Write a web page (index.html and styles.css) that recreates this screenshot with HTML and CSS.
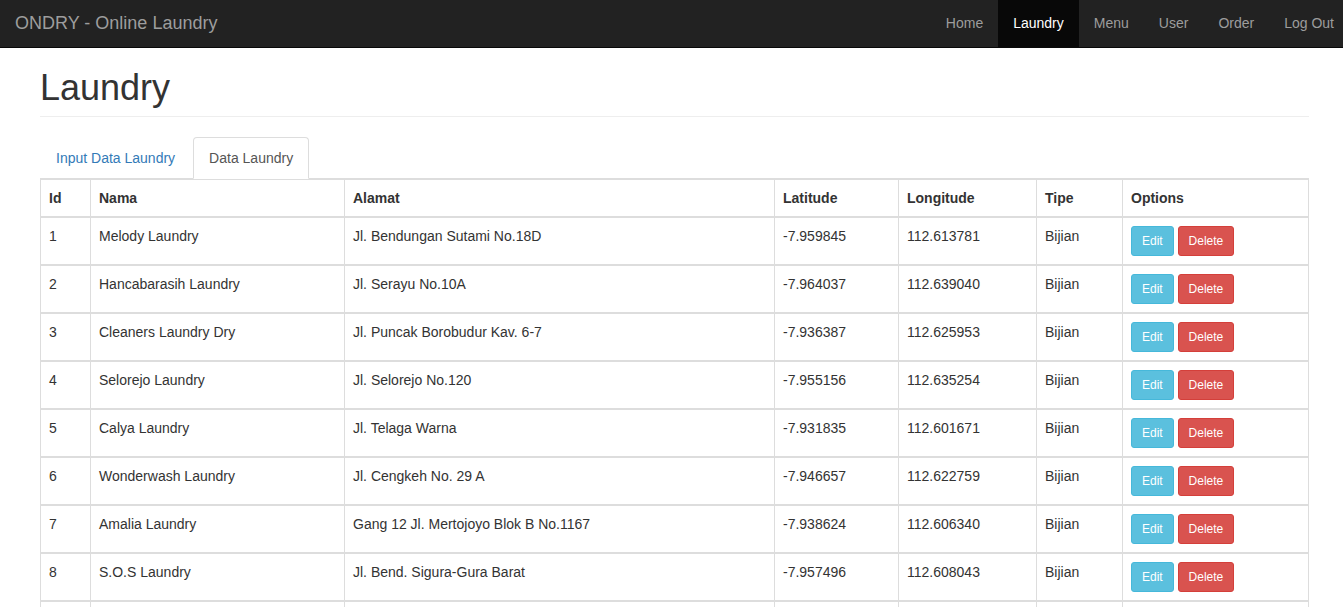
FILE: index.html
```html
<!DOCTYPE html>
<html>
<head>
<meta charset="utf-8">
<title>ONDRY - Online Laundry</title>
<link rel="stylesheet" href="styles.css">
</head>
<body>
<nav class="navbar">
  <a class="brand" href="#">ONDRY - Online Laundry</a>
  <ul class="nav-links">
    <li><a href="#">Home</a></li>
    <li class="active"><a href="#">Laundry</a></li>
    <li><a href="#">Menu</a></li>
    <li><a href="#">User</a></li>
    <li><a href="#">Order</a></li>
    <li><a href="#">Log Out</a></li>
  </ul>
</nav>
<div class="container">
  <div class="page-header"><h1>Laundry</h1></div>
  <ul class="tabs">
    <li><a href="#">Input Data Laundry</a></li>
    <li class="active"><a href="#">Data Laundry</a></li>
  </ul>
  <table class="data">
    <colgroup>
      <col class="c-id"><col class="c-nama"><col class="c-alamat"><col class="c-lat"><col class="c-lng"><col class="c-tipe"><col class="c-opt">
    </colgroup>
    <thead>
      <tr><th>Id</th><th>Nama</th><th>Alamat</th><th>Latitude</th><th>Longitude</th><th>Tipe</th><th>Options</th></tr>
    </thead>
    <tbody><tr><td>1</td><td>Melody Laundry</td><td>Jl. Bendungan Sutami No.18D</td><td>-7.959845</td><td>112.613781</td><td>Bijian</td><td><a class="btn info" href="#">Edit</a> <a class="btn danger" href="#">Delete</a></td></tr></tbody>
    <tbody><tr><td>2</td><td>Hancabarasih Laundry</td><td>Jl. Serayu No.10A</td><td>-7.964037</td><td>112.639040</td><td>Bijian</td><td><a class="btn info" href="#">Edit</a> <a class="btn danger" href="#">Delete</a></td></tr></tbody>
    <tbody><tr><td>3</td><td>Cleaners Laundry Dry</td><td>Jl. Puncak Borobudur Kav. 6-7</td><td>-7.936387</td><td>112.625953</td><td>Bijian</td><td><a class="btn info" href="#">Edit</a> <a class="btn danger" href="#">Delete</a></td></tr></tbody>
    <tbody><tr><td>4</td><td>Selorejo Laundry</td><td>Jl. Selorejo No.120</td><td>-7.955156</td><td>112.635254</td><td>Bijian</td><td><a class="btn info" href="#">Edit</a> <a class="btn danger" href="#">Delete</a></td></tr></tbody>
    <tbody><tr><td>5</td><td>Calya Laundry</td><td>Jl. Telaga Warna</td><td>-7.931835</td><td>112.601671</td><td>Bijian</td><td><a class="btn info" href="#">Edit</a> <a class="btn danger" href="#">Delete</a></td></tr></tbody>
    <tbody><tr><td>6</td><td>Wonderwash Laundry</td><td>Jl. Cengkeh No. 29 A</td><td>-7.946657</td><td>112.622759</td><td>Bijian</td><td><a class="btn info" href="#">Edit</a> <a class="btn danger" href="#">Delete</a></td></tr></tbody>
    <tbody><tr><td>7</td><td>Amalia Laundry</td><td>Gang 12 Jl. Mertojoyo Blok B No.1167</td><td>-7.938624</td><td>112.606340</td><td>Bijian</td><td><a class="btn info" href="#">Edit</a> <a class="btn danger" href="#">Delete</a></td></tr></tbody>
    <tbody><tr><td>8</td><td>S.O.S Laundry</td><td>Jl. Bend. Sigura-Gura Barat</td><td>-7.957496</td><td>112.608043</td><td>Bijian</td><td><a class="btn info" href="#">Edit</a> <a class="btn danger" href="#">Delete</a></td></tr></tbody>
    <tbody><tr class="empty-row"><td></td><td></td><td></td><td></td><td></td><td></td><td></td></tr></tbody>
  </table>
</div>
</body>
</html>
```
FILE: styles.css
```css
* { box-sizing: border-box; }
html, body { margin: 0; padding: 0; }
body {
  font-family: "Liberation Sans", Arial, Helvetica, sans-serif;
  font-size: 14px;
  line-height: 20px;
  color: #333;
  background: #fff;
  overflow-x: hidden;
}
a { text-decoration: none; }

.navbar {
  height: 48px;
  background: #222;
  border-bottom: 1px solid #080808;
  display: flex;
  justify-content: space-between;
  align-items: stretch;
  overflow: hidden;
}
.brand {
  font-size: 18px;
  line-height: 20px;
  padding: 13px 15px 14px;
  color: #9d9d9d;
}
.nav-links {
  list-style: none;
  margin: 0 -6px 0 0;
  padding: 0;
  display: flex;
}
.nav-links a {
  display: block;
  padding: 13px 15px 14px;
  line-height: 20px;
  color: #9d9d9d;
}
.nav-links .active a {
  color: #fff;
  background: #080808;
}

.container {
  padding: 20px 34px 0 40px;
}
.page-header {
  padding-bottom: 8px;
  border-bottom: 1px solid #eee;
}
.page-header h1 {
  margin: 0;
  font-size: 36px;
  line-height: 39.6px;
  font-weight: 500;
  color: #333;
}

.tabs {
  list-style: none;
  margin: 20px 0 0;
  padding: 0;
  display: flex;
  border-bottom: 1px solid #ddd;
}
.tabs li { margin-bottom: -1px; margin-right: 2px; }
.tabs a {
  display: block;
  padding: 10px 15px;
  line-height: 20px;
  border: 1px solid transparent;
  border-radius: 4px 4px 0 0;
  color: #337ab7;
}
.tabs .active a {
  color: #555;
  background: #fff;
  border-color: #ddd #ddd transparent;
}

.data {
  width: 100%;
  border-collapse: collapse;
  border-spacing: 0;
  border: 1px solid #ddd;
  table-layout: fixed;
}
.c-id { width: 50px; }
.c-nama { width: 254px; }
.c-alamat { width: 430px; }
.c-lat { width: 124px; }
.c-lng { width: 138px; }
.c-tipe { width: 86px; }
.c-opt { width: auto; }
.data th, .data td {
  border: 1px solid #ddd;
  padding: 8px;
  line-height: 20px;
  text-align: left;
  vertical-align: top;
  white-space: nowrap;
}
.data th {
  font-weight: bold;
  vertical-align: bottom;
  border-bottom-width: 2px;
}
.data tbody + tbody { border-top: 2px solid #ddd; }
.empty-row td { height: 46px; }

.btn {
  display: inline-block;
  padding: 5px 10px;
  font-size: 12px;
  line-height: 18px;
  border: 1px solid transparent;
  border-radius: 3px;
  color: #fff;
  vertical-align: middle;
}
.btn.info { background: #5bc0de; border-color: #46b8da; }
.btn.danger { background: #d9534f; border-color: #d43f3a; }
```
